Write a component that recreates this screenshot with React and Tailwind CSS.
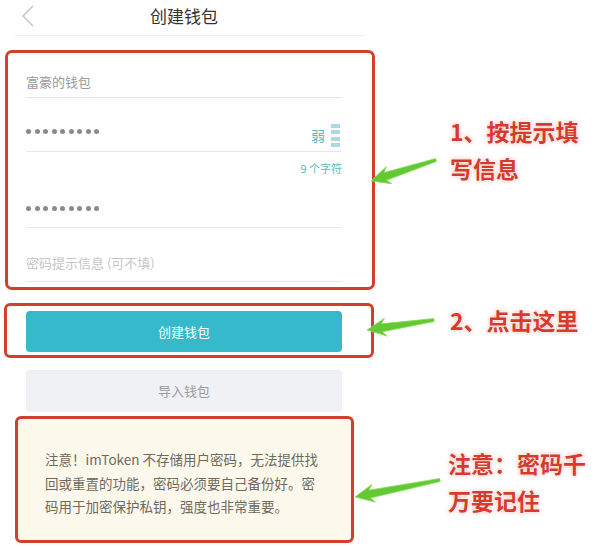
import React from 'react'

const FONT = { fontFamily: '"Noto Sans CJK SC", "Noto Sans", sans-serif' }

// green hand-drawn style arrows: [tailX, tailY, tipX, tipY]
const ARROWS = [
  [436, 160, 371, 181],
  [434, 320, 367, 330],
  [440, 480, 355, 497],
]

function arrowPoints([tx, ty, px, py]) {
  const len = Math.hypot(px - tx, py - ty)
  const dx = (px - tx) / len
  const dy = (py - ty) / len
  const nx = -dy
  const ny = dx
  const at = (d, w) => `${px - dx * d + nx * w},${py - dy * d + ny * w}`
  return [
    at(len, 1.5),
    at(15, 4),
    at(19, 9),
    `${px},${py}`,
    at(19, -9),
    at(15, -4),
    at(len, -1.5),
  ].join(' ')
}

function Dots() {
  return (
    <div className="flex gap-[3.5px]">
      {Array.from({ length: 9 }).map((_, i) => (
        <span key={i} className="w-[5px] h-[5px] rounded-full bg-[#8a8a8a]" />
      ))}
    </div>
  )
}

function Note({ children }) {
  return (
    <div className="text-[23px] leading-[37px] font-bold text-[#d63a2c] [text-shadow:0_0_1px_#fff,0_0_2px_#fff,0_0_4px_rgba(214,58,44,0.45)]">
      {children}
    </div>
  )
}

export default function App() {
  return (
    <div className="relative w-[600px] h-[547px] bg-white overflow-hidden flex" style={FONT}>
      {/* phone screen */}
      <div className="w-[380px] flex flex-col">
        {/* header */}
        <div className="relative h-[36px] mx-[15px] border-b border-[#eeeeee] flex items-center justify-center">
          <svg className="absolute left-[7px] top-[5px]" width="12" height="22" viewBox="0 0 12 22">
            <path d="M11 1 L1 11 L11 21" fill="none" stroke="#bdbdbd" strokeWidth="1.3" />
          </svg>
          <span className="text-[17px] text-[#333333] -mt-[4px] -ml-[12px]">创建钱包</span>
        </div>

        {/* form box */}
        <div className="mt-[14px] ml-[5px] w-[370px] h-[240px] border-[3px] border-[#d2402b] rounded-[7px] pl-[18px] pr-[30px] flex flex-col">
          <div className="h-[45px] pt-[20px] border-b border-[#e6e6e6] text-[13px] leading-[18px] text-[#9a9a9a]">
            富豪的钱包
          </div>
          <div className="h-[54px] border-b border-[#e6e6e6] flex items-end justify-between pb-[4px]">
            <div className="mb-[13px]">
              <Dots />
            </div>
            <div className="flex items-center gap-[6px]">
              <span className="text-[14px] text-[#5fb8bb]">弱</span>
              <div className="flex flex-col gap-[2.5px] mr-[2px]">
                <span className="w-[9px] h-[4px] bg-[#a9dadd]" />
                <span className="w-[9px] h-[4px] bg-[#a9dadd]" />
                <span className="w-[9px] h-[4px] bg-[#a9dadd]" />
                <span className="w-[9px] h-[4px] bg-[#a9dadd]" />
              </div>
            </div>
          </div>
          <div className="mt-[8px] h-[16px] text-right text-[11px] leading-[16px] text-[#5fb8bb]">9 个字符</div>
          <div className="h-[52px] border-b border-[#e6e6e6] flex items-end pb-[16px]">
            <Dots />
          </div>
          <div className="h-[54px] border-b border-[#e6e6e6] flex items-end pb-[9px] text-[13px] leading-[18px] text-[#c6c6c6]">
            密码提示信息 (可不填)
          </div>
        </div>

        {/* create button box */}
        <div className="mt-[13px] ml-[4px] w-[370px] h-[55px] border-[3px] border-[#d2402b] rounded-[6px] pl-[19px] pt-[5px]">
          <div className="w-[316px] h-[41px] rounded-[4px] bg-[#35b9cb] flex items-center justify-center text-[13px] text-white">
            创建钱包
          </div>
        </div>

        {/* import button */}
        <div className="mt-[12px] ml-[26px] w-[316px] h-[42px] rounded-[3px] bg-[#eff1f4] flex items-center justify-center text-[13px] text-[#9b9b9b]">
          导入钱包
        </div>

        {/* warning box */}
        <div className="mt-[4px] ml-[15px] w-[339px] h-[127px] border-[3px] border-[#d2402b] rounded-[6px] bg-[#fdf8ec] pl-[27px] pt-[29px] text-[13.5px] leading-[23.5px] text-[#6e6a5c]">
          <div>注意！imToken 不存储用户密码，无法提供找</div>
          <div>回或重置的功能，密码必须要自己备份好。密</div>
          <div>码用于加密保护私钥，强度也非常重要。</div>
        </div>
      </div>

      {/* annotations */}
      <div className="flex-1 flex flex-col pl-[70px]">
        <div className="mt-[113px]">
          <Note>
            1、按提示填
            <br />
            写信息
          </Note>
        </div>
        <div className="mt-[115px]">
          <Note>2、点击这里</Note>
        </div>
        <div className="mt-[106px] -ml-[2px]">
          <Note>
            注意：密码千
            <br />
            万要记住
          </Note>
        </div>
      </div>

      {/* arrows */}
      <svg className="absolute inset-0 pointer-events-none" width="600" height="547">
        {ARROWS.map((a, i) => (
          <polygon key={i} points={arrowPoints(a)} fill="#62c935" stroke="#86dc55" strokeWidth="0.8" strokeLinejoin="round" />
        ))}
      </svg>
    </div>
  )
}
